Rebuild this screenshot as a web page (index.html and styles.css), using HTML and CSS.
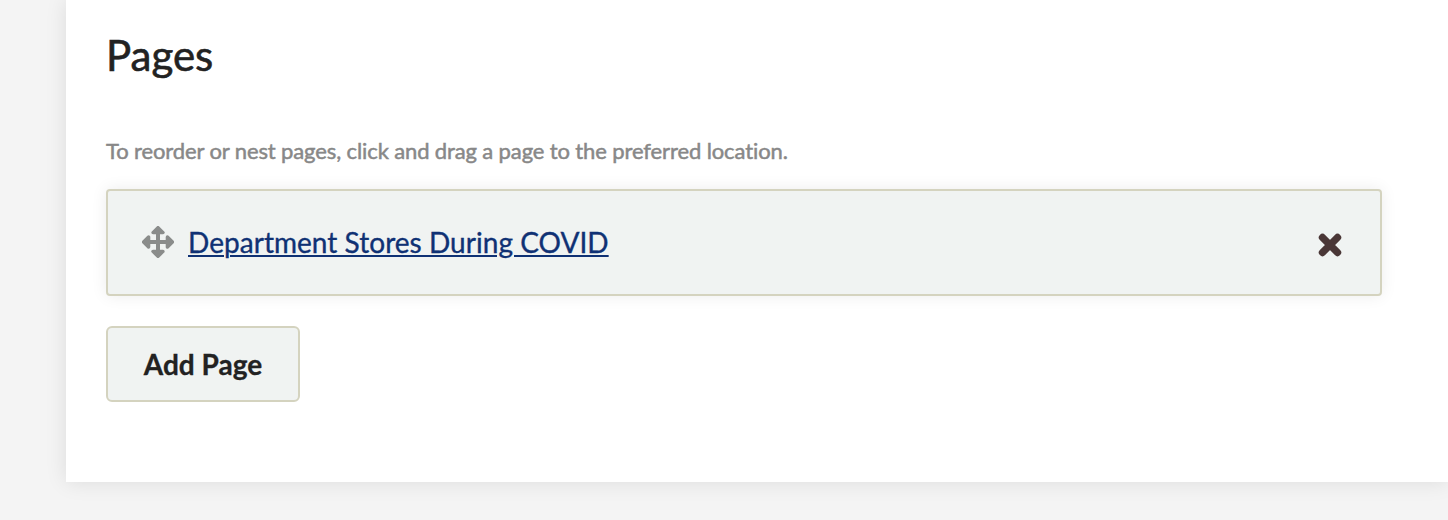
FILE: index.html
```html
<!DOCTYPE html>
<html lang="en">
<head>
<meta charset="utf-8">
<title>Pages</title>
<link rel="stylesheet" href="styles.css">
</head>
<body>
<main class="panel">
  <h2 class="title">Pages</h2>
  <p class="hint">To reorder or nest pages, click and drag a page to the preferred location.</p>
  <div class="page-item">
    <svg class="move" viewBox="0 0 32 32" aria-hidden="true"><g id="arrow"><path d="M16 1.6L21 6.6H11Z"/><path class="stem" d="M16 6V16"/></g><use href="#arrow" transform="rotate(90 16 16)"/><use href="#arrow" transform="rotate(180 16 16)"/><use href="#arrow" transform="rotate(270 16 16)"/></svg>
    <a class="page-link" href="#">Department Stores During COVID</a>
    <button class="remove" aria-label="Remove page"><svg viewBox="0 0 24 24"><path d="M4.5 4.5l15 15M19.5 4.5l-15 15"/></svg></button>
  </div>
  <button class="add">Add Page</button>
</main>
</body>
</html>
```
FILE: styles.css
```css
* { box-sizing: border-box; }
body {
  margin: 0;
  height: 520px;
  overflow: hidden;
  background: #f4f4f4;
  color: #222;
  font-family: Lato, sans-serif;
}
.panel {
  height: 482px;
  margin-left: 66px;
  padding: 29px 66px 0 40px;
  background: #fff;
  box-shadow: 0 0 20px rgba(0, 0, 0, .1);
}
.title { margin: 0; font-size: 42px; line-height: 52px; font-weight: 400; -webkit-text-stroke: .6px; }
.hint {
  margin: 55px 0 23px;
  font-size: 22px;
  line-height: 30px;
  color: #888;
  letter-spacing: -.09px;
  word-spacing: -.15px;
  font-variant-ligatures: none;
  -webkit-text-stroke: .5px;
}
.page-item {
  display: flex;
  align-items: center;
  height: 107px;
  padding: 0 38px 2px 34px;
  border: 2px solid #d4d3bf;
  border-radius: 4px;
  background: #f0f3f2;
  box-shadow: 0 0 16px rgba(0, 0, 0, .08);
}
.move {
  width: 32px;
  height: 32px;
  margin-right: 14px;
  fill: #8a8c8b;
  stroke: #8a8c8b;
  stroke-width: 3.4;
  stroke-linejoin: round;
}
.stem { stroke-width: 4; }
.page-link {
  color: #0f3174;
  font-size: 28px;
  line-height: 36px;
  letter-spacing: .04px;
  text-decoration: underline;
  text-decoration-thickness: 2px;
  text-underline-offset: 2px;
  -webkit-text-stroke: .35px;
}
.remove { margin-left: auto; padding: 7px 0 0; border: 0; background: none; }
.remove svg {
  display: block;
  width: 24px;
  height: 24px;
  stroke: #4a3737;
  stroke-width: 7.4;
  stroke-linecap: round;
}
.add {
  display: block;
  width: 194px;
  height: 76px;
  margin-top: 30px;
  padding: 0;
  border: 2px solid #d4d3bf;
  border-radius: 6px;
  background: #f0f3f2;
  color: #222;
  font: 700 28px Lato, sans-serif;
  -webkit-text-stroke: .3px;
}
```
